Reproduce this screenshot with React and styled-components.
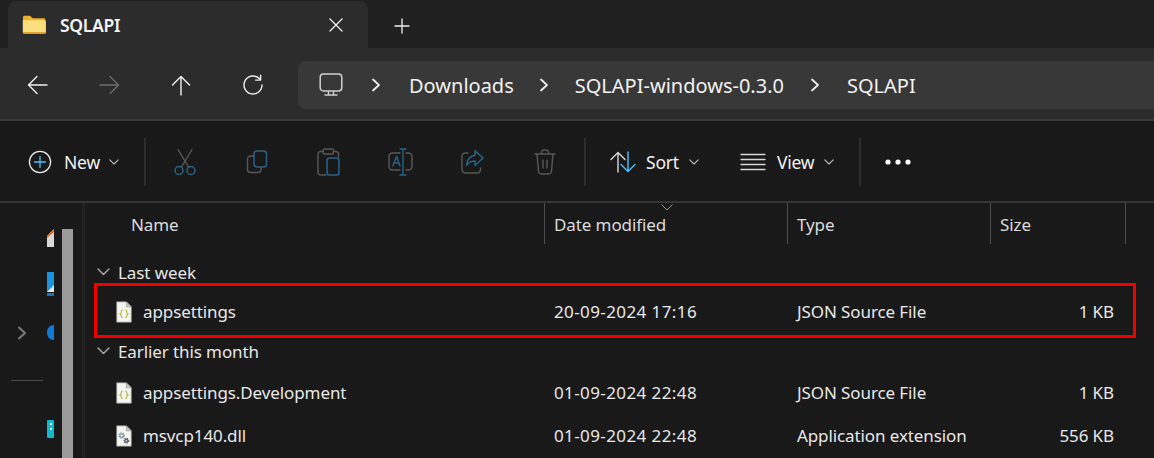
import React from 'react'
import styled, { createGlobalStyle } from 'styled-components'

const GlobalStyle = createGlobalStyle`
  html, body {
    margin: 0;
    padding: 0;
    background: #191919;
    overflow: hidden;
  }
  body {
    font-family: "Noto Sans", "Open Sans", sans-serif;
    color: #fff;
  }
`

const Window = styled.div`
  width: 1154px;
  height: 458px;
  display: flex;
  flex-direction: column;
  overflow: hidden;
`

const TabStrip = styled.div`
  height: 48px;
  flex: none;
  display: flex;
  align-items: flex-end;
  padding-left: 8px;
  background: #202020;
`

const Tab = styled.div`
  width: 360px;
  height: 47px;
  box-sizing: border-box;
  display: flex;
  align-items: center;
  padding: 0 25px 0 14px;
  background: #2c2c2c;
  border-radius: 8px 8px 0 0;
`

const TabTitle = styled.span`
  flex: 1;
  margin-left: 14px;
  font-size: 17.5px;
  font-weight: 600;
  letter-spacing: -0.3px;
  color: #f4f4f4;
`

const NewTab = styled.div`
  width: 68px;
  display: flex;
  justify-content: center;
  padding: 0 0 14px 0;
`

const NavBar = styled.div`
  height: 73px;
  flex: none;
  box-sizing: border-box;
  display: flex;
  align-items: center;
  padding: 3px 0 0 1px;
  background: #2c2c2c;
  border-bottom: 2px solid #3a3a3a;
`

const NavButton = styled.div`
  width: 72px;
  display: flex;
  justify-content: center;
  flex: none;
`

const AddressBar = styled.div`
  flex: 1;
  height: 48px;
  margin-left: 9px;
  display: flex;
  align-items: center;
  padding-left: 21px;
  background: #383838;
  border-radius: 7px 0 0 7px;
`

const Crumb = styled.span`
  font-size: 20px;
  color: #f2f2f2;
`

const CrumbSep = styled.div`
  width: ${p => p.$w}px;
  display: flex;
  justify-content: center;
  flex: none;
`

const Toolbar = styled.div`
  height: 82px;
  flex: none;
  box-sizing: border-box;
  display: flex;
  align-items: center;
  padding: 1px 0 0 28px;
  background: #191919;
  border-bottom: 2px solid #353535;
`

const Divider = styled.div`
  width: 2px;
  height: 48px;
  flex: none;
  background: #2e2e2e;
`

const ToolLabel = styled.span`
  font-size: 17.5px;
  letter-spacing: -0.2px;
  color: #f2f2f2;
  margin-left: ${p => p.$ml}px;
`

const Chevron = styled.svg`
  margin-left: ${p => p.$ml}px;
  flex: none;
`

const ToolButton = styled.div`
  width: 72px;
  flex: none;
  display: flex;
  justify-content: center;
`

const Spacer = styled.div`
  width: ${p => p.$w}px;
  flex: none;
`

const Body = styled.div`
  flex: 1;
  min-height: 0;
  display: flex;
  background: #191919;
`

const Sidebar = styled.div`
  width: 85px;
  flex: none;
  box-sizing: border-box;
  display: flex;
  border-right: 3px solid #222;
`

const TreeColumn = styled.div`
  width: 62px;
  flex: none;
  position: relative;
  overflow: hidden;
  display: flex;
  flex-direction: column;
  align-items: flex-end;
`

const TreeIcon = styled.svg`
  display: block;
  flex: none;
  margin-top: ${p => p.$mt}px;
  margin-right: 8px;
`

const TreeExpander = styled.svg`
  position: absolute;
  left: 17px;
  top: 123px;
`

const TreeRule = styled.div`
  position: absolute;
  left: 11px;
  top: 177px;
  width: 32px;
  height: 1px;
  background: #4a4a4a;
`

const ScrollTrack = styled.div`
  width: 11px;
  margin-top: 26px;
  flex: none;
  background: #9b9b9b;
`

const Content = styled.div`
  flex: 1;
  min-width: 0;
  padding-right: 18px;
`

const GRID = '460px 243px 203px 135px 1fr'

const HeaderRow = styled.div`
  display: grid;
  grid-template-columns: ${GRID};
  height: 41px;
`

const HeaderCell = styled.div`
  position: relative;
  box-sizing: border-box;
  display: flex;
  align-items: center;
  padding-left: ${p => p.$pl}px;
  padding-top: 2px;
  font-size: 17px;
  letter-spacing: -0.1px;
  color: #dcdcdc;
  border-right: 1px solid ${p => (p.$last ? 'transparent' : '#4d4d4d')};
`

const SortCaret = styled.svg`
  position: absolute;
  left: 116px;
  top: 1px;
`

const GroupRow = styled.div`
  height: ${p => p.$h}px;
  box-sizing: border-box;
  display: flex;
  align-items: center;
  padding: ${p => p.$pt || 0}px 0 ${p => p.$pb || 0}px 12px;
  font-size: 17px;
  letter-spacing: -0.1px;
  color: #e6e6e6;
`

const GroupLabel = styled.span`
  margin-left: 8px;
`

const FileRow = styled.div`
  position: relative;
  height: ${p => p.$h}px;
  box-sizing: border-box;
  display: grid;
  grid-template-columns: ${GRID};
  align-items: center;
  font-size: 17px;
  letter-spacing: -0.1px;
  color: #e8e8e8;

  ${p => p.$marked && `
    padding-top: 2px;

    &::after {
      content: "";
      position: absolute;
      left: 9px;
      right: 0;
      top: 0;
      bottom: 0;
      border: 3px solid #f00000;
      pointer-events: none;
    }
  `}
`

const NameCell = styled.div`
  display: flex;
  align-items: center;
  padding-left: 31px;
`

const NameText = styled.span`
  margin-left: 11px;
`

const Cell = styled.div`
  padding-left: 9px;
`

const DateCell = styled(Cell)`
  letter-spacing: 0.4px;
`

const SizeCell = styled.div`
  text-align: right;
  padding-right: 12px;
`

const s = { fill: 'none', strokeLinecap: 'round', strokeLinejoin: 'round' }
const GREY = '#585858'
const BLUE = '#2a6286'

const ChevronDown = ({ ml, size = 10, color = '#bdbdbd' }) => (
  <Chevron $ml={ml} width={size} height={size * 0.6} viewBox="0 0 10 6">
    <path d="M0.8 0.8 5 5 9.2 0.8" stroke={color} strokeWidth="1.1" {...s} />
  </Chevron>
)

const ChevronRight = () => (
  <svg width="10" height="16" viewBox="0 0 10 16">
    <path d="M2 2.5 8 8 2 13.5" stroke="#f0f0f0" strokeWidth="1.7" {...s} />
  </svg>
)

const FolderIcon = () => (
  <svg width="24" height="19" viewBox="0 0 24 19">
    <path d="M1 2.5C1 1.4 1.6.8 2.6.8H8l2.6 2.4H22c.7 0 1.2.5 1.2 1.2V6H1z" fill="#eeb02f" />
    <path d="M.8 5.2H23c.5 0 .9.4.9.9v11c0 .9-.6 1.5-1.5 1.5H2.3c-.9 0-1.5-.6-1.5-1.5z" fill="#fbdf7e" />
    <path d="M.8 17h23.1v.2c0 .9-.6 1.5-1.5 1.5H2.3c-.9 0-1.5-.6-1.5-1.5z" fill="#dfa52e" />
  </svg>
)

const ArrowIcon = ({ dir = 'left', color = '#efefef' }) => {
  const d = {
    left: 'M22 12H3.5M12 3.5 3.5 12l8.5 8.5',
    right: 'M3 12h18.5M13 3.5 21.5 12 13 20.5',
    up: 'M12 22V3.5M3.5 12 12 3.5 20.5 12'
  }[dir]
  return (
    <svg width="24" height="24" viewBox="0 0 24 24">
      <path d={d} stroke={color} strokeWidth="1.4" {...s} />
    </svg>
  )
}

const RefreshIcon = () => (
  <svg width="24" height="24" viewBox="0 0 24 24">
    <path d="M19 6.3A9 9 0 1 0 21 12" stroke="#efefef" strokeWidth="1.4" {...s} />
    <path d="M19.6 2.2v4.9h-5" stroke="#efefef" strokeWidth="1.4" {...s} />
  </svg>
)

const MonitorIcon = () => (
  <svg width="24" height="24" viewBox="0 0 24 24">
    <rect x="1.2" y="1" width="21.6" height="17" rx="3.2" stroke="#cfcfcf" strokeWidth="1.5" fill="none" />
    <path d="M9.5 18.5v3M14.5 18.5v3M6 22h12" stroke="#cfcfcf" strokeWidth="1.4" {...s} />
  </svg>
)

const NewIcon = () => (
  <svg width="24" height="24" viewBox="0 0 24 24">
    <circle cx="12" cy="12" r="10.6" stroke="#e6e6e6" strokeWidth="1.3" fill="none" />
    <path d="M12 6.5v11M6.5 12h11" stroke="#4cc2ff" strokeWidth="1.3" {...s} />
  </svg>
)

const CutIcon = () => (
  <svg width="22" height="28" viewBox="0 0 22 28">
    <path d="M4 1.5 14.5 19M18 1.5 7.5 19" stroke={GREY} strokeWidth="1.4" {...s} />
    <circle cx="5" cy="22.5" r="4" stroke={BLUE} strokeWidth="1.5" fill="none" />
    <circle cx="17" cy="22.5" r="4" stroke={BLUE} strokeWidth="1.5" fill="none" />
  </svg>
)

const CopyIcon = () => (
  <svg width="22" height="24" viewBox="0 0 22 24">
    <path d="M8 6H4.5A3 3 0 0 0 1.5 9v10.5a3 3 0 0 0 3 3H12a3 3 0 0 0 3-3V18" stroke={GREY} strokeWidth="1.4" {...s} />
    <rect x="8" y="1" width="12.5" height="16" rx="3" stroke={BLUE} strokeWidth="1.5" fill="none" />
  </svg>
)

const PasteIcon = () => (
  <svg width="23" height="28" viewBox="0 0 23 28">
    <path d="M6 3.5H3.5A2.5 2.5 0 0 0 1 6v18.5A2.5 2.5 0 0 0 3.500 27H9M16.500 3.500H19A2.500 2.500 0 0 1 21.500 6v3" stroke={GREY} strokeWidth="1.4" {...s} />
    <rect x="6" y="1" width="10.5" height="5" rx="1.5" stroke={GREY} strokeWidth="1.4" fill="none" />
    <rect x="10" y="10" width="12" height="17" rx="2.5" stroke={BLUE} strokeWidth="1.5" fill="none" />
  </svg>
)

const RenameIcon = () => (
  <svg width="25" height="28" viewBox="0 0 25 28">
    <path d="M12 5H4.5A3.5 3.5 0 0 0 1 8.5v10A3.5 3.5 0 0 0 4.5 22H12M18 5h2.5A3.5 3.5 0 0 1 24 8.5v10a3.5 3.5 0 0 1-3.5 3.5H18" stroke={GREY} strokeWidth="1.4" {...s} />
    <path d="M15 1.5v25M12 1h6M12 27h6M4.800 18 8.500 8.500 12 18M6 15h5" stroke={BLUE} strokeWidth="1.4" {...s} />
  </svg>
)

const ShareIcon = () => (
  <svg width="23" height="25" viewBox="0 0 23 25">
    <path d="M7 4H4.5A3.5 3.5 0 0 0 1 7.5v13A3.5 3.5 0 0 0 4.5 24H16a3.5 3.5 0 0 0 3.5-3.5V19" stroke={GREY} strokeWidth="1.4" {...s} />
    <path d="M14 1.5 22 9l-8 7.5V12C10 12 7.5 13.5 5.500 16.500 6 11 9 7 14 6.300z" stroke={BLUE} strokeWidth="1.5" fill="none" strokeLinejoin="round" />
  </svg>
)

const TrashIcon = () => (
  <svg width="22" height="26" viewBox="0 0 22 26">
    <path d="M1 5h20M7.500 5V3.500A2.500 2.500 0 0 1 10 1h2a2.500 2.500 0 0 1 2.500 2.500V5M3 5l1.500 17a3 3 0 0 0 3 3h7a3 3 0 0 0 3-3L19 5M9 11v8M13 11v8" stroke={GREY} strokeWidth="1.4" {...s} />
  </svg>
)

const SortIcon = () => (
  <svg width="26" height="22" viewBox="0 0 26 22">
    <path d="M8 21V1.500M1 8.500 8 1.500l7 7" stroke="#d8d8d8" strokeWidth="1.4" {...s} />
    <path d="M18 1v19.500M11 13.500l7 7 7-7" stroke="#4cc2ff" strokeWidth="1.4" {...s} />
  </svg>
)

const ViewIcon = () => (
  <svg width="26" height="18" viewBox="0 0 26 18">
    <path d="M1 1.500h24M1 6.500h24M1 11.500h24M1 16.500h24" stroke="#d8d8d8" strokeWidth="1.3" {...s} />
  </svg>
)

const MoreIcon = () => (
  <svg width="26" height="6" viewBox="0 0 26 6">
    <circle cx="3" cy="3" r="2.6" fill="#fff" />
    <circle cx="13" cy="3" r="2.6" fill="#fff" />
    <circle cx="23" cy="3" r="2.6" fill="#fff" />
  </svg>
)

const CloseIcon = () => (
  <svg width="14" height="14" viewBox="0 0 14 14">
    <path d="M1 1 13 13M13 1 1 13" stroke="#f0f0f0" strokeWidth="1.3" {...s} />
  </svg>
)

const PlusIcon = () => (
  <svg width="16" height="16" viewBox="0 0 16 16">
    <path d="M8 1v14M1 8h14" stroke="#f0f0f0" strokeWidth="1.3" {...s} />
  </svg>
)

const PageShape = () => (
  <>
    <path d="M.7.7H11L16.300 6v16.300H.7z" fill="#f5f5f0" stroke="#8a8a8a" strokeWidth=".8" />
    <path d="M11 .7V6h5.300z" fill="#c9c9c9" stroke="#8a8a8a" strokeWidth=".6" />
  </>
)

const JsonFileIcon = () => (
  <svg width="16" height="22" viewBox="0 0 17 23">
    <PageShape />
    <path d="M7 9.500c-1.500 0-1.500.8-1.500 2s0 1.700-1 2c1 .3 1 1 1 2s0 2 1.500 2M10 9.500c1.500 0 1.500.8 1.500 2s0 1.700 1 2c-1 .3-1 1-1 2s0 2-1.500 2" stroke="#b5b53c" strokeWidth="1.2" fill="none" />
  </svg>
)

const Gear = ({ cx, cy, r, color }) => (
  <>
    <circle cx={cx} cy={cy} r={r} fill="none" stroke={color} strokeWidth="1.6" />
    <circle cx={cx} cy={cy} r={r + 1} fill="none" stroke={color} strokeWidth="1.1" strokeDasharray="1.3 1.2" />
  </>
)

const DllFileIcon = () => (
  <svg width="16" height="22" viewBox="0 0 17 23">
    <PageShape />
    <Gear cx={6} cy={11} r={2} color="#8fa0ad" />
    <Gear cx={11} cy={16.5} r={1.6} color="#5d666e" />
  </svg>
)

const files = {
  settings: { date: '20-09-2024 17:16', type: 'JSON Source File', size: '1 KB' },
  dev: { date: '01-09-2024 22:48', type: 'JSON Source File', size: '1 KB' },
  dll: { date: '01-09-2024 22:48', type: 'Application extension', size: '556 KB' }
}

const File = ({ name, info, icon, h, marked }) => (
  <FileRow $h={h} $marked={marked}>
    <NameCell>
      {icon}
      <NameText>{name}</NameText>
    </NameCell>
    <DateCell>{info.date}</DateCell>
    <Cell>{info.type}</Cell>
    <SizeCell>{info.size}</SizeCell>
  </FileRow>
)

const App = () => (
  <Window>
    <GlobalStyle />
    <TabStrip>
      <Tab>
        <FolderIcon />
        <TabTitle>SQLAPI</TabTitle>
        <CloseIcon />
      </Tab>
      <NewTab>
        <PlusIcon />
      </NewTab>
    </TabStrip>
    <NavBar>
      <NavButton><ArrowIcon dir="left" /></NavButton>
      <NavButton><ArrowIcon dir="right" color="#6c6c6c" /></NavButton>
      <NavButton><ArrowIcon dir="up" /></NavButton>
      <NavButton><RefreshIcon /></NavButton>
      <AddressBar>
        <MonitorIcon />
        <CrumbSep $w={66}><ChevronRight /></CrumbSep>
        <Crumb>Downloads</Crumb>
        <CrumbSep $w={61}><ChevronRight /></CrumbSep>
        <Crumb>SQLAPI-windows-0.3.0</Crumb>
        <CrumbSep $w={63}><ChevronRight /></CrumbSep>
        <Crumb>SQLAPI</Crumb>
      </AddressBar>
    </NavBar>
    <Toolbar>
      <NewIcon />
      <ToolLabel $ml={12}>New</ToolLabel>
      <ChevronDown ml={9} />
      <Spacer $w={25} />
      <Divider />
      <Spacer $w={3} />
      <ToolButton><CutIcon /></ToolButton>
      <ToolButton><CopyIcon /></ToolButton>
      <ToolButton><PasteIcon /></ToolButton>
      <ToolButton><RenameIcon /></ToolButton>
      <ToolButton><ShareIcon /></ToolButton>
      <ToolButton><TrashIcon /></ToolButton>
      <Spacer $w={3} />
      <Divider />
      <Spacer $w={24} />
      <SortIcon />
      <ToolLabel $ml={10}>Sort</ToolLabel>
      <ChevronDown ml={10} />
      <Spacer $w={41} />
      <ViewIcon />
      <ToolLabel $ml={11}>View</ToolLabel>
      <ChevronDown ml={10} />
      <Spacer $w={25} />
      <Divider />
      <Spacer $w={24} />
      <MoreIcon />
    </Toolbar>
    <Body>
      <Sidebar>
        <TreeColumn>
          <TreeIcon $mt={26} width="7" height="18" viewBox="0 0 7 18">
            <path d="M7 0 0 7v11h7z" fill="#d8d8d8" />
            <path d="M7 0 0 7v2l7-6z" fill="#e06a1a" />
          </TreeIcon>
          <TreeIcon $mt={25} width="7" height="25" viewBox="0 0 7 25">
            <rect width="7" height="20" fill="#1a94e0" />
            <path d="M7 13 0 20h7z" fill="#e8e8e8" />
            <rect y="21" width="7" height="3" fill="#1676b8" />
          </TreeIcon>
          <TreeIcon $mt={28} width="7" height="15" viewBox="0 0 7 15">
            <path d="M7 0C3 0 0 3 0 7.500S3 15 7 15z" fill="#0f7ad8" />
          </TreeIcon>
          <TreeIcon $mt={80} width="7" height="18" viewBox="0 0 7 18">
            <rect width="7" height="18" rx="1" fill="#14b8cc" />
            <rect x="3" y="3" width="2" height="2" fill="#d8f6fa" />
            <rect x="3" y="8" width="2" height="2" fill="#d8f6fa" />
          </TreeIcon>
          <TreeExpander width="10" height="14" viewBox="0 0 10 14">
            <path d="M2 1.500 8 7l-6 5.500" stroke="#7a7a7a" strokeWidth="2" {...s} />
          </TreeExpander>
          <TreeRule />
        </TreeColumn>
        <ScrollTrack />
      </Sidebar>
      <Content>
        <HeaderRow>
          <HeaderCell $pl={46}>Name</HeaderCell>
          <HeaderCell $pl={9}>
            Date modified
            <SortCaret width="12" height="7" viewBox="0 0 12 7">
              <path d="M.8.8 6 6 11.200.8" stroke="#9a9a9a" strokeWidth="1" {...s} />
            </SortCaret>
          </HeaderCell>
          <HeaderCell $pl={9}>Type</HeaderCell>
          <HeaderCell $pl={9}>Size</HeaderCell>
          <HeaderCell $last />
        </HeaderRow>
        <GroupRow $h={39} $pt={17}>
          <ChevronDown ml={0} size={13} color="#a8a8a8" />
          <GroupLabel>Last week</GroupLabel>
        </GroupRow>
        <File name="appsettings" info={files.settings} icon={<JsonFileIcon />} h={55} marked />
        <GroupRow $h={33} $pb={7}>
          <ChevronDown ml={0} size={13} color="#a8a8a8" />
          <GroupLabel>Earlier this month</GroupLabel>
        </GroupRow>
        <File name="appsettings.Development" info={files.dev} icon={<JsonFileIcon />} h={43} />
        <File name="msvcp140.dll" info={files.dll} icon={<DllFileIcon />} h={43} />
      </Content>
    </Body>
  </Window>
)

export default App
